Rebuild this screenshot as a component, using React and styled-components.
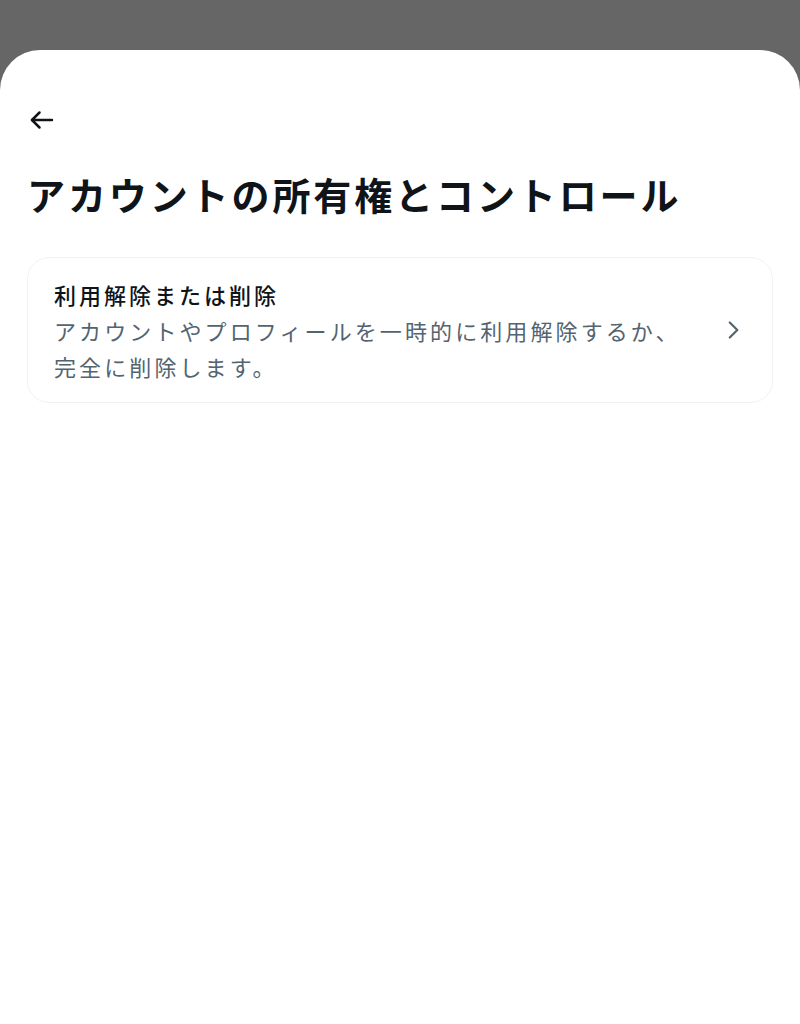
import React from "react";
import styled, { createGlobalStyle } from "styled-components";

const GlobalStyle = createGlobalStyle`
  html, body {
    margin: 0;
    padding: 0;
    background: #666666;
    font-family: "Noto Sans CJK JP", "Noto Sans", sans-serif;
  }
`;

const Backdrop = styled.div`
  min-height: 1024px;
  padding-top: 50px;
  box-sizing: border-box;
  display: flex;
  flex-direction: column;
`;

const Sheet = styled.div`
  flex: 1;
  background: #ffffff;
  border-radius: 40px 40px 0 0;
  padding: 55px 27px 0 27px;
`;

const BackButton = styled.button`
  display: flex;
  align-items: center;
  background: none;
  border: none;
  padding: 0;
  color: #0f1419;
  cursor: pointer;
`;

const Title = styled.h1`
  margin: 31px 0 0 0;
  font-size: 38px;
  font-weight: 700;
  letter-spacing: 2.9px;
  line-height: 56px;
  color: #0f1419;
`;

const Card = styled.div`
  margin-top: 35px;
  border: 1px solid #eff3f4;
  border-radius: 22px;
  padding: 18px 26px 18px 26px;
  display: flex;
  align-items: center;
  gap: 16px;
  cursor: pointer;
`;

const CardBody = styled.div`
  flex: 1;
`;

const CardTitle = styled.div`
  font-size: 22px;
  font-weight: 500;
  letter-spacing: 3px;
  line-height: 36px;
  color: #0f1419;
`;

const CardText = styled.div`
  font-size: 22px;
  letter-spacing: 3.1px;
  line-height: 36px;
  color: #536471;
`;

const Chevron = styled.div`
  display: flex;
  color: #536471;
`;

function App() {
  return (
    <>
      <GlobalStyle />
      <Backdrop>
        <Sheet>
          <BackButton aria-label="戻る">
            <svg width="30" height="30" viewBox="0 0 24 24" fill="none" stroke="currentColor" strokeWidth="2" strokeLinecap="round" strokeLinejoin="round">
              <path d="M20 12H4" />
              <path d="M10 6l-6 6 6 6" />
            </svg>
          </BackButton>
          <Title>アカウントの所有権とコントロール</Title>
          <Card>
            <CardBody>
              <CardTitle>利用解除または削除</CardTitle>
              <CardText>
                アカウントやプロフィールを一時的に利用解除するか、
                <br />
                完全に削除します。
              </CardText>
            </CardBody>
            <Chevron>
              <svg width="26" height="26" viewBox="0 0 24 24" fill="none" stroke="currentColor" strokeWidth="2" strokeLinecap="round" strokeLinejoin="round">
                <path d="M9 5l7 7-7 7" />
              </svg>
            </Chevron>
          </Card>
        </Sheet>
      </Backdrop>
    </>
  );
}

export default App;
